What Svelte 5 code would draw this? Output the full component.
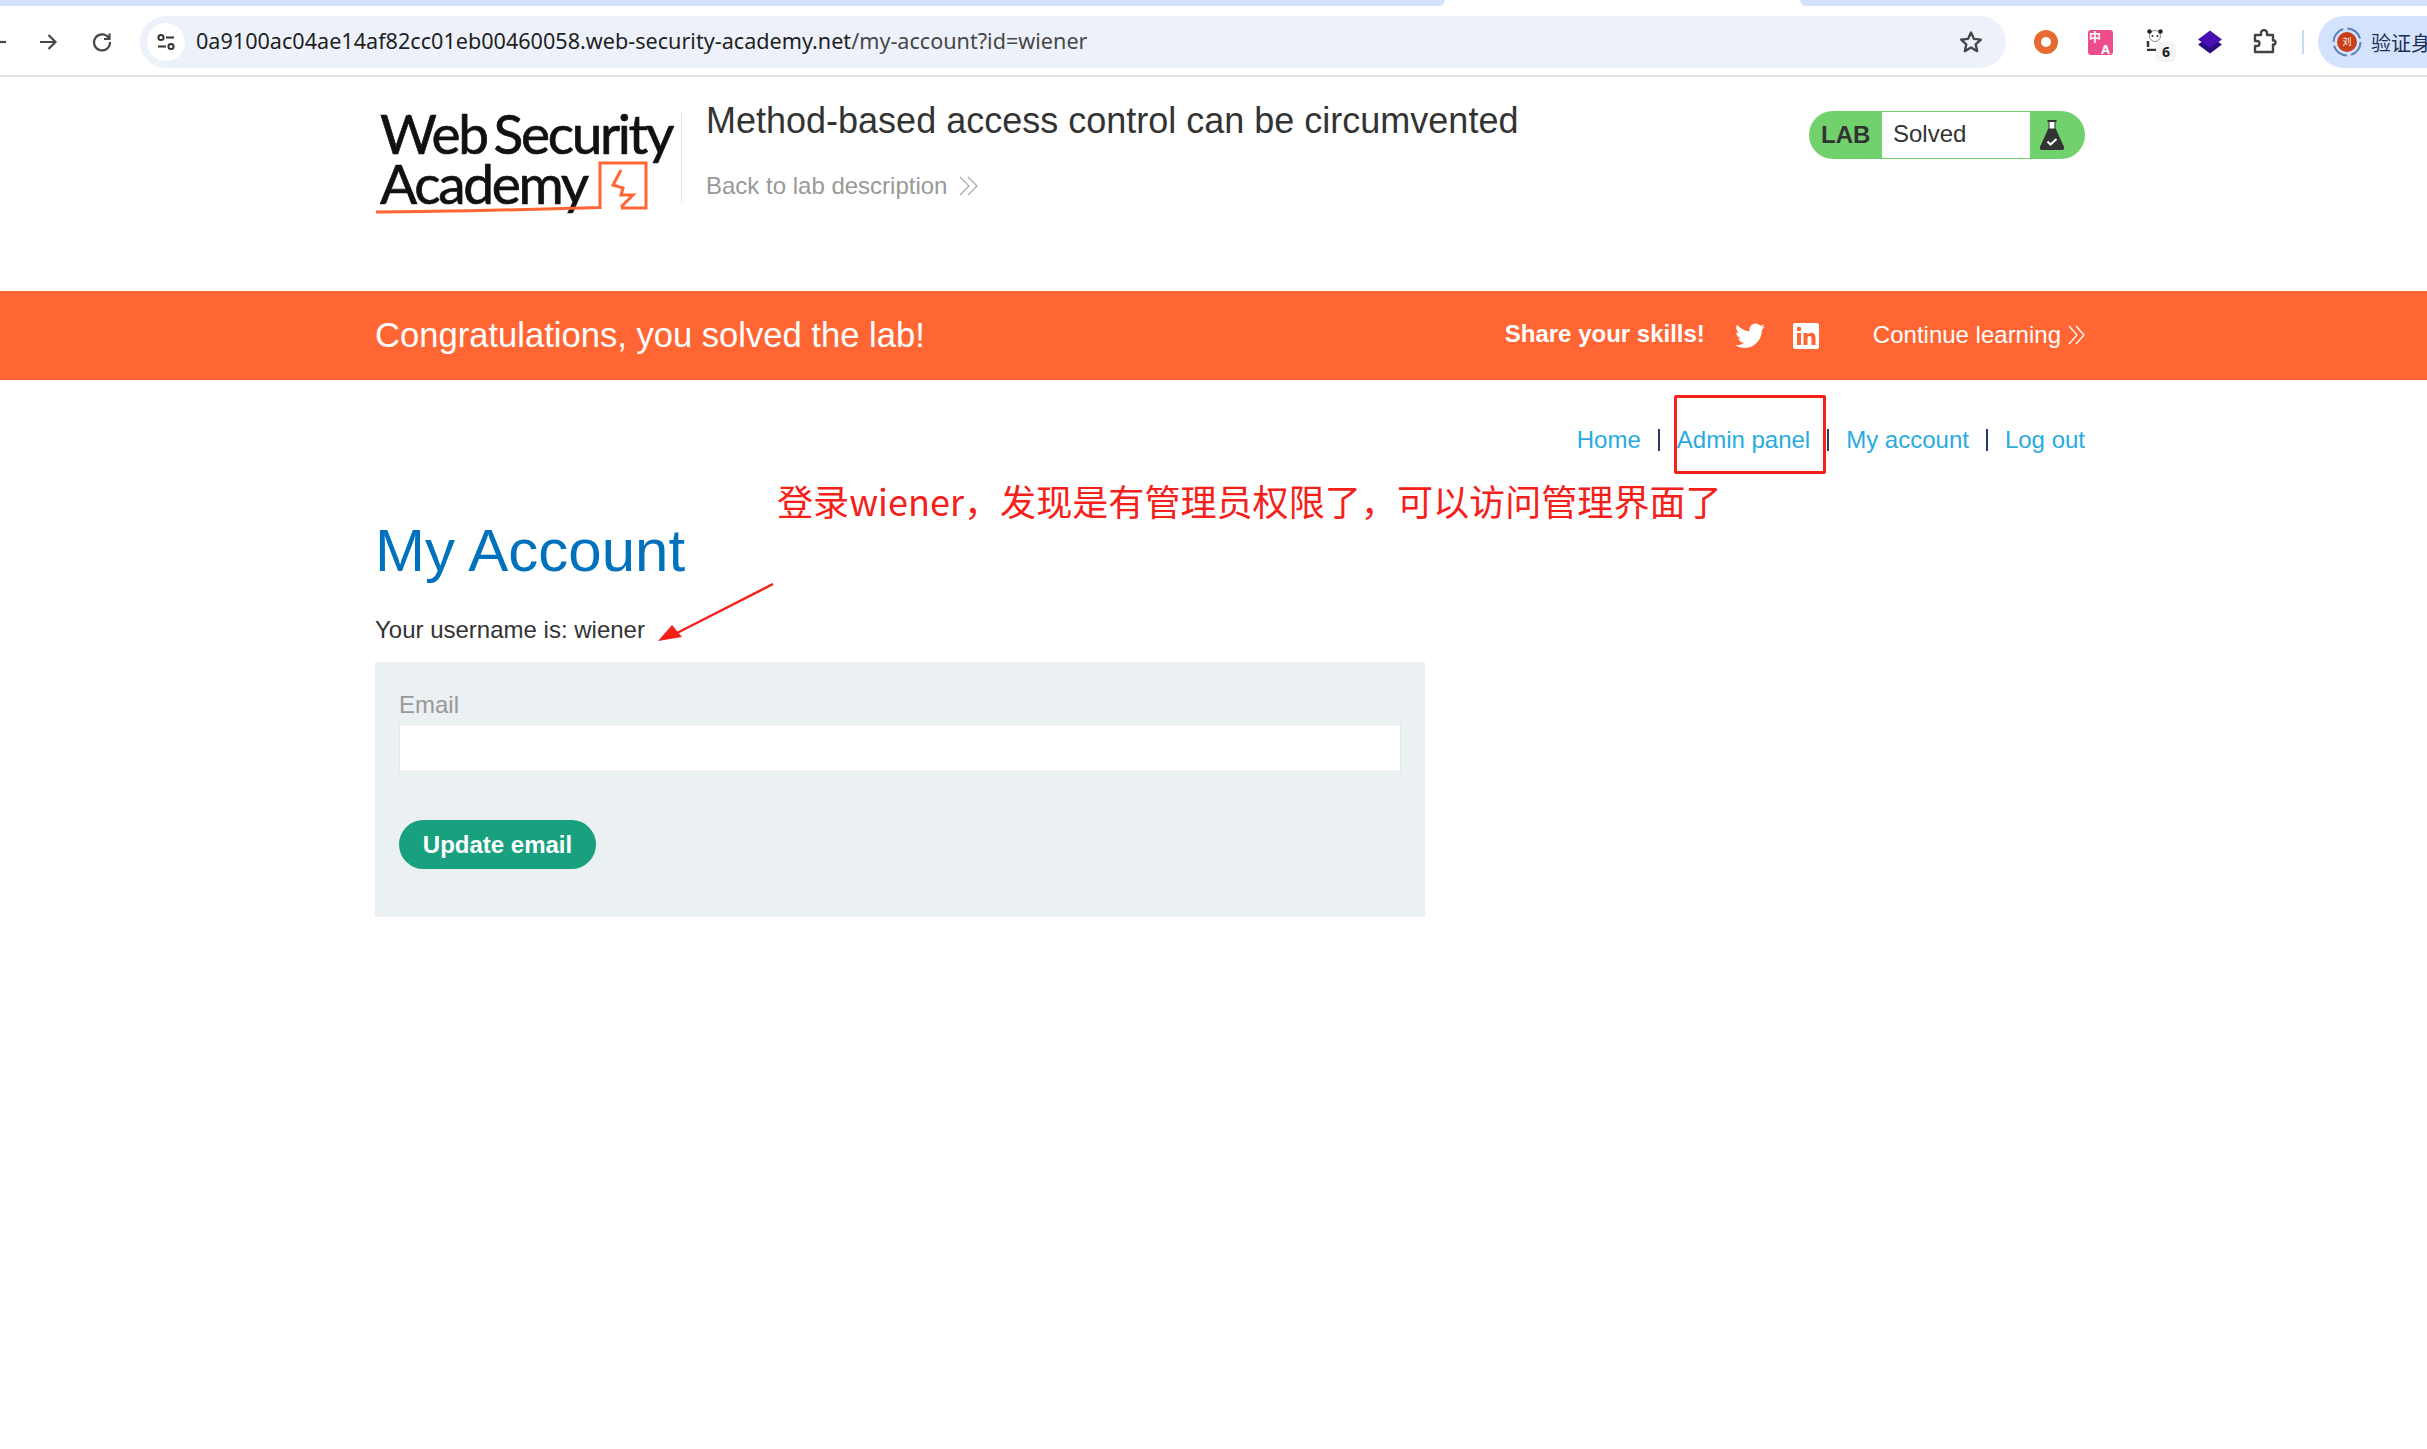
<script>
	const links = ['Home', 'Admin panel', 'My account', 'Log out'];
</script>

<div class="page">
	<!-- browser chrome -->
	<div class="tabstrip">
		<div class="tab-left"></div>
		<div class="tab-right"></div>
	</div>
	<div class="toolbar">
		<svg class="nav-back" width="14" height="24" viewBox="0 0 14 24"><path d="M-8 12H6" stroke="#474747" stroke-width="2.2" fill="none" /></svg>
		<svg class="nav-icon" width="24" height="24" viewBox="0 0 24 24"><path d="M4 12h15M12.5 5l7 7-7 7" stroke="#474747" stroke-width="2.2" fill="none" /></svg>
		<svg class="nav-icon" width="24" height="24" viewBox="0 0 24 24"><path d="M19 8.5A8 8 0 1 0 20 12M19.5 3.5v5.5H14" stroke="#474747" stroke-width="2.2" fill="none" /></svg>
		<div class="omnibox">
			<div class="site-btn">
				<svg width="22" height="22" viewBox="0 0 22 22"><g stroke="#333" stroke-width="2" fill="none"><circle cx="6" cy="6.5" r="2.6" /><path d="M11 6.5h8M3 15.5h8" /><circle cx="16" cy="15.5" r="2.6" /></g></svg>
			</div>
			<div class="url"><span>0a9100ac04ae14af82cc01eb00460058.web-security-academy.net</span><span class="url-path">/my-account?id=wiener</span></div>
			<svg class="star" width="26" height="26" viewBox="0 0 24 24"><path d="M12 3.2l2.7 5.9 6.4.7-4.8 4.3 1.4 6.3L12 17.1l-5.7 3.3 1.4-6.3-4.8-4.3 6.4-.7z" fill="none" stroke="#474747" stroke-width="2.2" stroke-linejoin="round" /></svg>
		</div>
		<div class="extensions">
			<svg width="26" height="26" viewBox="0 0 26 26"><circle cx="13" cy="13" r="8.500" fill="none" stroke="#e56b32" stroke-width="7" /></svg>
			<div class="ext-translate"><span class="zh">中</span><span class="en">A</span></div>
			<div class="ext-panda">
				<svg width="18" height="22" viewBox="0 0 18 22"><circle cx="9" cy="7" r="5.500" fill="#fff" stroke="#888" stroke-width="1" /><circle cx="3.500" cy="2.500" r="2.200" fill="#222" /><circle cx="14.500" cy="2.500" r="2.200" fill="#222" /><circle cx="6.500" cy="7" r="1.100" fill="#333" /><circle cx="11.500" cy="7" r="1.100" fill="#333" /><path d="M2 12v6M1 21h9" stroke="#333" stroke-width="2.500" /></svg>
				<span class="badge">6</span>
			</div>
			<svg width="26" height="26" viewBox="0 0 26 26"><path d="M1 15.500l12 9 12-9-12-8z" fill="#2a0a80" /><path d="M1 10.500l12-9 12 9-12 8.500z" fill="#4a0fb0" /></svg>
			<svg width="26" height="26" viewBox="0 0 26 26"><path d="M3 6h6V4a3 3 0 0 1 6 0v2h6v5.500h1.500a2.500 2.500 0 0 1 0 4H21V23H3v-6h2a2.500 2.500 0 0 0 0-5H3z" fill="none" stroke="#444" stroke-width="2.400" stroke-linejoin="round" /></svg>
		</div>
		<div class="sep"></div>
		<div class="profile">
			<div class="avatar-wrap">
				<svg width="30" height="30" viewBox="0 0 30 30"><circle cx="15" cy="15" r="13.500" fill="none" stroke="#5b80b5" stroke-width="2" stroke-dasharray="17 4.200" /></svg>
				<div class="avatar">刘</div>
			</div>
			<span class="profile-name">验证身</span>
		</div>
	</div>

	<!-- lab header -->
	<header class="lab-header">
		<div class="container header-row">
			<div class="logo">
				<span class="logo-line">Web Security</span>
				<span class="logo-line">Academy</span>
				<svg class="logo-mark" width="300" height="64" viewBox="0 0 300 64">
					<path d="M1 57C80 57 160 54 225 52.500V8h46v45h-25" fill="none" stroke="#ff6633" stroke-width="3" />
					<path d="M246 15l-8 15 10 3-2 7h12l-12 12" fill="none" stroke="#ff6633" stroke-width="3" />
				</svg>
			</div>
			<div class="logo-divider"></div>
			<div class="title-block">
				<h2>Method-based access control can be circumvented</h2>
				<a class="back">Back to lab description
					<svg width="20" height="20" viewBox="0 0 20 20"><path d="M1 1l9 9-9 9M9 1l9 9-9 9" fill="none" stroke="#aaa" stroke-width="1.200" /></svg>
				</a>
			</div>
			<div class="status">
				<span class="status-lab">LAB</span>
				<span class="status-text">Solved</span>
				<span class="status-icon">
					<svg width="24" height="30" viewBox="0 0 24 30">
						<path d="M7.500 0h9v2h-1v6L24 27q.5 3-2 3H2q-2.500 0-2-3L8.500 8V2h-1z" fill="#333" />
						<path d="M9.500 2h5v6.500h-5z" fill="#fff" />
						<path d="M7.500 21.500l3 3 6-5.500" fill="none" stroke="#fff" stroke-width="2" />
					</svg>
				</span>
			</div>
		</div>
	</header>

	<!-- solved banner -->
	<section class="banner">
		<div class="container banner-row">
			<h4>Congratulations, you solved the lab!</h4>
			<div class="banner-right">
				<span class="share">Share your skills!</span>
				<svg class="twitter" width="30" height="26" viewBox="0 0 24 20"><path d="M24 2.400a9.800 9.800 0 0 1-2.800.8A4.900 4.900 0 0 0 23.300.5a9.800 9.800 0 0 1-3.100 1.200 4.900 4.900 0 0 0-8.400 4.500A14 14 0 0 1 1.700.9a4.900 4.900 0 0 0 1.500 6.600 4.900 4.900 0 0 1-2.200-.6v.1a4.900 4.900 0 0 0 3.900 4.800 4.900 4.900 0 0 1-2.200.1 4.900 4.900 0 0 0 4.600 3.400A9.900 9.900 0 0 1 0 17.300 14 14 0 0 0 7.500 19.500c9.100 0 14-7.500 14-14v-.6A10 10 0 0 0 24 2.400z" fill="#fff" /></svg>
				<svg class="linkedin" width="26" height="26" viewBox="0 0 26 26"><rect width="26" height="26" rx="2" fill="#fff" /><g fill="#ff6633"><rect x="4" y="10" width="4" height="12" /><circle cx="6" cy="6" r="2.300" /><path d="M10.500 10h3.800v1.800c.7-1.200 2-2.100 3.800-2.100 3.200 0 4.400 2 4.400 5.300V22h-4v-6.200c0-1.600-.5-2.700-1.900-2.700s-2.100 1.100-2.100 2.700V22h-4z" /></g></svg>
				<a class="continue">Continue learning
					<svg width="17" height="20" viewBox="0 0 17 20"><path d="M1 1l8 9-8 9M8 1l8 9-8 9" fill="none" stroke="#fff" stroke-width="1.300" /></svg>
				</a>
			</div>
		</div>
	</section>

	<!-- content -->
	<main class="container content">
		<nav class="top-links">
			{#each links as link, i}
				{#if i > 0}<span class="pipe"></span>{/if}
				<a>{link}</a>
			{/each}
		</nav>
		<h1>My Account</h1>
		<p class="username">Your username is: wiener</p>
		<form class="panel" onsubmit={(e) => e.preventDefault()}>
			<label for="email">Email</label>
			<input id="email" type="email" />
			<button type="submit">Update email</button>
		</form>
	</main>

	<!-- red annotations drawn on the screenshot -->
	<div class="mark-box"></div>
	<div class="mark-text">登录wiener，发现是有管理员权限了，可以访问管理界面了</div>
	<svg class="mark-arrow" width="120" height="62" viewBox="0 0 120 62">
		<path d="M116 1L20 50" stroke="#f5201a" stroke-width="2.400" fill="none" />
		<path d="M1 58L15 42 25 54z" fill="#f5201a" />
	</svg>
</div>

<style>
	:global(body) {
		background: #fff;
	}

	.page {
		position: relative;
		min-height: 1449px;
		overflow: hidden;
		font-family: 'Liberation Sans', Arial, sans-serif;
		color: #333;
	}

	.container {
		width: 1710px;
		margin-left: 375px;
	}

	.tabstrip {
		display: flex;
		justify-content: space-between;
		height: 6px;
	}

	.tab-left {
		width: 1445px;
		background: #d3e3fd;
		border-bottom-right-radius: 8px;
	}

	.tab-right {
		width: 627px;
		background: #d3e3fd;
		border-bottom-left-radius: 8px;
	}

	.toolbar {
		display: flex;
		align-items: center;
		height: 71px;
		border-bottom: 2px solid #e1e1e1;
		box-sizing: border-box;
		padding-top: 3px;
	}

	.nav-back {
		margin-right: 22px;
		flex: none;
	}

	.nav-icon {
		margin-right: 30px;
		flex: none;
	}

	.omnibox {
		display: flex;
		align-items: center;
		width: 1866px;
		height: 52px;
		margin-left: -4px;
		border-radius: 26px;
		background: #edf2fa;
		flex: none;
		box-sizing: border-box;
		padding: 0 22px 0 7px;
	}

	.site-btn {
		display: flex;
		align-items: center;
		justify-content: center;
		width: 38px;
		height: 38px;
		border-radius: 50%;
		background: #fff;
	}

	.url {
		flex: 1;
		margin-left: 11px;
		padding-bottom: 4px;
		font-family: 'Noto Sans', sans-serif;
		font-size: 21.6px;
		color: #1f1f1f;
		white-space: nowrap;
	}

	.url-path {
		color: #474747;
	}

	.extensions {
		display: flex;
		align-items: center;
		gap: 29px;
		margin-left: 27px;
		flex: none;
	}

	.ext-translate {
		display: grid;
		grid-template-columns: 1fr 1fr;
		grid-template-rows: 1fr 1fr;
		width: 25px;
		height: 25px;
		border-radius: 3px;
		background: #ee4d8b;
		color: #fff;
		font-size: 12px;
		line-height: 12px;
		font-weight: 700;
	}

	.zh {
		font-family: 'Noto Sans CJK SC', sans-serif;
		margin: 1px 0 0 1px;
	}

	.en {
		grid-column: 2;
		grid-row: 2;
		font-family: 'Noto Sans', sans-serif;
		font-size: 13px;
	}

	.ext-panda {
		position: relative;
		width: 26px;
		height: 26px;
		box-sizing: border-box;
		padding-left: 4px;
	}

	.badge {
		position: absolute;
		left: 14px;
		top: 13px;
		width: 20px;
		height: 20px;
		border-radius: 5px;
		background: #f4f4f4;
		font-family: 'Noto Sans', sans-serif;
		font-size: 14px;
		font-weight: 700;
		line-height: 20px;
		text-align: center;
		color: #1f1f1f;
	}

	.sep {
		width: 2px;
		height: 24px;
		margin-left: 24px;
		background: #c9daf8;
		flex: none;
	}

	.profile {
		display: flex;
		align-items: center;
		height: 52px;
		margin-left: 14px;
		padding-left: 14px;
		flex: 1;
		border-radius: 26px 0 0 26px;
		background: #d3e3fd;
		white-space: nowrap;
		overflow: hidden;
	}

	.avatar-wrap {
		position: relative;
		width: 30px;
		height: 30px;
		flex: none;
	}

	.avatar {
		position: absolute;
		left: 5px;
		top: 5px;
		width: 20px;
		height: 20px;
		border-radius: 50%;
		background: #c8401a;
		color: #fff;
		font-family: 'Noto Sans CJK SC', sans-serif;
		font-size: 9px;
		line-height: 20px;
		text-align: center;
	}

	.profile-name {
		margin-left: 9px;
		font-family: 'Noto Sans CJK SC', sans-serif;
		font-size: 20px;
		color: #1f2f50;
	}

	.lab-header {
		height: 214px;
	}

	.header-row {
		display: flex;
		align-items: flex-start;
	}

	.logo {
		position: relative;
		display: flex;
		flex-direction: column;
		width: 306px;
		padding-top: 31px;
		flex: none;
		color: #111;
		font-family: 'Lato', sans-serif;
		font-size: 55px;
		line-height: 50px;
		letter-spacing: -2.3px;
		word-spacing: -5px;
		-webkit-text-stroke: 0.7px #111;
		white-space: nowrap;
	}

	.logo-mark {
		position: absolute;
		left: 0;
		top: 78px;
	}

	.logo-line {
		margin-left: 5px;
	}

	.logo-divider {
		width: 1px;
		height: 92px;
		margin-top: 34px;
		background: #e4e4e4;
		flex: none;
	}

	.title-block {
		flex: 1;
		margin-left: 24px;
	}

	h2 {
		margin: 24px 0 0;
		font-size: 36px;
		font-weight: 400;
		line-height: 40px;
		color: #333;
	}

	.back {
		display: flex;
		align-items: center;
		gap: 12px;
		margin-top: 31px;
		font-size: 24px;
		color: #999;
	}

	.status {
		display: flex;
		align-items: stretch;
		width: 276px;
		height: 48px;
		margin-top: 34px;
		border-radius: 24px;
		background: #70d16d;
		box-sizing: border-box;
		padding: 1px 0;
		flex: none;
	}

	.status-lab {
		width: 73px;
		font-size: 24px;
		font-weight: 700;
		line-height: 46px;
		padding-left: 12px;
		box-sizing: border-box;
	}

	.status-text {
		width: 148px;
		padding-left: 11px;
		box-sizing: border-box;
		background: #fff;
		font-size: 24px;
		line-height: 44px;
	}

	.status-icon {
		display: flex;
		align-items: center;
		padding-left: 10px;
	}

	.banner {
		height: 89px;
		background: #ff6633;
		color: #fff;
	}

	.banner-row {
		display: flex;
		align-items: center;
		justify-content: space-between;
		height: 89px;
	}

	h4 {
		margin: 0;
		font-size: 34.6px;
		font-weight: 400;
	}

	.banner-right {
		display: flex;
		align-items: center;
		font-size: 24px;
	}

	.share {
		margin-bottom: 4px;
		font-weight: 700;
	}

	.twitter {
		margin-left: 30px;
		margin-right: 3px;
	}

	.linkedin {
		margin-left: 25px;
		margin-right: 2px;
	}

	.continue {
		display: flex;
		align-items: center;
		gap: 7px;
		margin-left: 52px;
		margin-bottom: 1px;
	}

	.top-links {
		display: flex;
		align-items: center;
		justify-content: flex-end;
		gap: 17px;
		margin-top: 46px;
		height: 28px;
		font-size: 24px;
		color: #29abe2;
	}

	.pipe {
		width: 2px;
		height: 22px;
		background: #2b3a67;
	}

	h1 {
		margin: 62px 0 0;
		font-size: 60px;
		font-weight: 400;
		line-height: 70px;
		color: #0071bc;
	}

	.username {
		margin: 30px 0 0;
		font-size: 24px;
		line-height: 28px;
	}

	.panel {
		display: flex;
		flex-direction: column;
		align-items: flex-start;
		width: 1050px;
		height: 255px;
		margin-top: 18px;
		padding: 29px 24px 0;
		box-sizing: border-box;
		background: #ebf0f2;
	}

	label {
		font-size: 24px;
		line-height: 28px;
		color: #999;
	}

	input {
		width: 100%;
		height: 48px;
		margin-top: 5px;
		padding: 0;
		box-sizing: border-box;
		border: 1px solid #e6e6e6;
		background: #fff;
	}

	button {
		width: 197px;
		height: 49px;
		margin-top: 48px;
		padding: 0;
		border: 0;
		border-radius: 25px;
		background: #18a07f;
		color: #fff;
		font-family: inherit;
		font-size: 24px;
		font-weight: 700;
	}

	.mark-box {
		position: absolute;
		left: 1674px;
		top: 395px;
		width: 146px;
		height: 73px;
		border: 3px solid #f5201a;
		border-radius: 2px;
	}

	.mark-text {
		position: absolute;
		left: 777px;
		top: 474px;
		font-family: 'Noto Sans CJK SC', sans-serif;
		font-size: 36.1px;
		line-height: 52px;
		color: #f5201a;
		white-space: nowrap;
	}

	.mark-arrow {
		position: absolute;
		left: 657px;
		top: 583px;
	}
</style>
